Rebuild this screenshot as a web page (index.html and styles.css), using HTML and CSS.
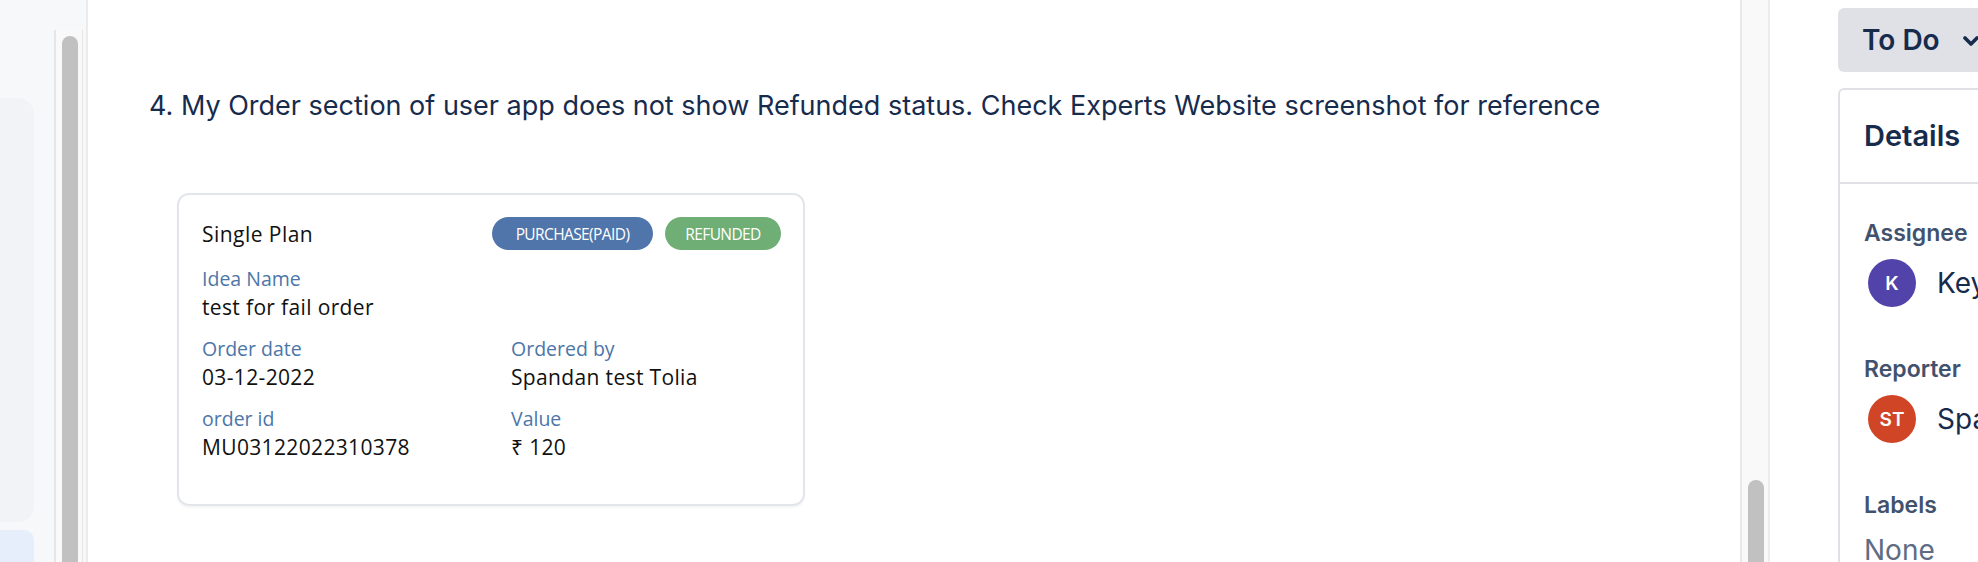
FILE: index.html
```html
<!DOCTYPE html>
<html>
<head>
<meta charset="utf-8">
<link rel="stylesheet" href="styles.css">
</head>
<body>
<div class="page">
  <aside class="sidebar">
    <div class="side-pane">
      <div class="side-card"></div>
      <div class="side-card-active"></div>
    </div>
    <div class="side-track"><div class="side-thumb"></div></div>
    <div class="side-edge"></div>
  </aside>

  <main class="main">
    <p class="issue-text">4. My Order section of user app does not show Refunded status. Check Experts Website screenshot for reference</p>
    <div class="order-card">
      <div class="order-head">
        <div class="plan">Single Plan</div>
        <div class="pills">
          <span class="pill pill-blue">PURCHASE(PAID)</span>
          <span class="pill pill-green">REFUNDED</span>
        </div>
      </div>
      <div class="field">
        <div class="f-label">Idea Name</div>
        <div class="f-value">test for fail order</div>
      </div>
      <div class="grid">
        <div class="field">
          <div class="f-label">Order date</div>
          <div class="f-value">03-12-2022</div>
        </div>
        <div class="field">
          <div class="f-label">Ordered by</div>
          <div class="f-value">Spandan test Tolia</div>
        </div>
        <div class="field">
          <div class="f-label">order id</div>
          <div class="f-value">MU03122022310378</div>
        </div>
        <div class="field">
          <div class="f-label">Value</div>
          <div class="f-value">₹ 120</div>
        </div>
      </div>
    </div>
  </main>

  <div class="main-track"><div class="main-thumb"></div></div>
  <div class="spacer"></div>

  <section class="right">
    <div class="right-inner">
      <button class="status-btn">To Do
        <svg class="chev" width="22" height="22" viewBox="0 0 22 22"><path d="M5 8 L11 14 L17 8" fill="none" stroke="#172b4d" stroke-width="3.6" stroke-linecap="round" stroke-linejoin="round"/></svg>
      </button>
      <div class="details">
        <div class="details-head">Details</div>
        <div class="details-body">
          <div class="d-label">Assignee</div>
          <div class="person">
            <span class="avatar av-purple">K</span>
            <span class="p-name">Keyur</span>
          </div>
          <div class="d-label">Reporter</div>
          <div class="person">
            <span class="avatar av-red">ST</span>
            <span class="p-name">Spandan</span>
          </div>
          <div class="d-label">Labels</div>
          <div class="none">None</div>
        </div>
      </div>
    </div>
  </section>
</div>
</body>
</html>
```
FILE: styles.css
```css
* { box-sizing: border-box; }
html, body { margin: 0; padding: 0; }
body {
  width: 1978px;
  height: 562px;
  overflow: hidden;
  background: #ffffff;
  font-family: Inter, "Noto Sans", sans-serif;
}
.page {
  display: flex;
  height: 562px;
}

/* left sidebar */
.sidebar {
  width: 88px;
  flex: none;
  display: flex;
  background: #f7f8fa;
}
.side-pane {
  width: 54px;
  padding-top: 98px;
  display: flex;
  flex-direction: column;
  gap: 8px;
}
.side-card {
  width: 34px;
  height: 424px;
  flex: none;
  background: #f1f3f6;
  border-radius: 0 16px 16px 0;
}
.side-card-active {
  width: 34px;
  height: 40px;
  flex: none;
  background: #e7eefb;
  border-radius: 0 10px 0 0;
}
.side-track {
  margin-top: 30px;
  width: 29px;
  background: #f9f9f9;
  border-left: 2px solid #e6e6e6;
  border-right: 1px solid #e6e6e6;
  padding: 6px 0 0 6px;
}
.side-thumb {
  width: 16px;
  height: 600px;
  background: #c1c1c1;
  border-radius: 8px;
}
.side-edge {
  width: 5px;
  border-right: 2px solid #ececec;
}

/* main */
.main {
  width: 1652px;
  flex: none;
  padding: 86px 0 0 61px;
}
.issue-text {
  margin: 0;
  font-size: 27px;
  line-height: 40px;
  color: #172b4d;
  white-space: nowrap;
}
.order-card {
  margin: 67px 0 0 28px;
  width: 628px;
  height: 313px;
  border: 2px solid #e2e6ea;
  border-radius: 12px;
  box-shadow: 0 2px 2px rgba(0,0,0,0.04);
  padding: 20px 22px 0 23px;
  font-family: "Open Sans", sans-serif;
  color: #111;
}
.order-head {
  display: flex;
  justify-content: space-between;
  align-items: center;
  height: 37px;
}
.plan {
  font-size: 21px;
  letter-spacing: 0.45px;
}
.pills {
  display: flex;
  gap: 12px;
}
.pill {
  height: 33px;
  border-radius: 17px;
  color: #fff;
  font-size: 15.5px;
  font-weight: 500;
  letter-spacing: -0.6px;
  display: flex;
  align-items: center;
  justify-content: center;
}
.pill-blue { width: 161px; background: #4f75aa; }
.pill-green { width: 116px; background: #6fae75; }

.field {
  margin-top: 13px;
}
.f-label {
  font-size: 19.5px;
  line-height: 27px;
  color: #4d76a8;
}
.f-value {
  font-size: 21px;
  letter-spacing: 0.35px;
  line-height: 30px;
  color: #111;
}
.grid {
  display: grid;
  grid-template-columns: 309px 1fr;
  row-gap: 0;
}

/* main scrollbar */
.main-track {
  width: 30px;
  flex: none;
  background: #f9f9f9;
  border-left: 2px solid #e8e8e8;
  border-right: 2px solid #ececec;
  padding: 480px 0 0 6px;
}
.main-thumb {
  width: 16px;
  height: 200px;
  background: #c1c1c1;
  border-radius: 8px;
}
.spacer {
  width: 68px;
  flex: none;
}

/* right panel */
.right {
  width: 140px;
  flex: none;
  overflow: hidden;
}
.right-inner {
  width: 480px;
  padding-top: 8px;
}
.status-btn {
  display: flex;
  align-items: center;
  gap: 20px;
  height: 64px;
  width: 200px;
  border: none;
  border-radius: 6px;
  background: #dfe1e6;
  color: #172b4d;
  font-family: Inter, "Noto Sans", sans-serif;
  font-size: 28px;
  font-weight: 600;
  padding: 0 0 0 24px;
}
.chev { flex: none; margin-top: 2px; }
.details {
  margin-top: 16px;
  border: 2px solid #dfe1e6;
  border-radius: 6px;
  height: 600px;
}
.details-head {
  height: 94px;
  border-bottom: 2px solid #dfe1e6;
  padding: 26px 0 0 24px;
  font-size: 29px;
  font-weight: 600;
  color: #172b4d;
  line-height: 40px;
}
.details-body {
  padding: 33px 0 0 24px;
}
.d-label {
  font-size: 23px;
  font-weight: 600;
  color: #42526e;
  line-height: 32px;
}
.person {
  display: flex;
  align-items: center;
  gap: 21px;
  margin: 10px 0 46px 4px;
}
.avatar {
  width: 48px;
  height: 48px;
  border-radius: 50%;
  color: #fff;
  font-size: 19px;
  font-weight: 600;
  display: flex;
  align-items: center;
  justify-content: center;
}
.av-purple { background: #5243aa; }
.av-red { background: #d04526; }
.p-name {
  font-size: 28px;
  color: #172b4d;
}
.none {
  margin-top: 12px;
  font-size: 28px;
  color: #5e6c84;
}
```
